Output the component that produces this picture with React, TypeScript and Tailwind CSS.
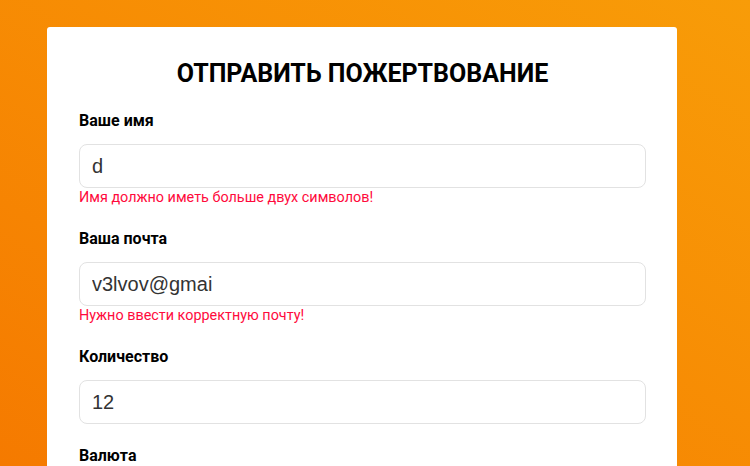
const fields = [
  { label: 'Ваше имя', value: 'd', error: 'Имя должно иметь больше двух символов!' },
  { label: 'Ваша почта', value: 'v3lvov@gmai', error: 'Нужно ввести корректную почту!' },
  { label: 'Количество', value: '12', error: '' },
];

const App = () => {
  return (
    <div className="h-[466px] overflow-hidden bg-gradient-to-tr from-[#f57a00] to-[#f89c08] px-[47px] pt-[27px] font-['Roboto',sans-serif]">
      <div className="w-[630px] min-h-[460px] rounded-[3px] bg-white pt-[31px] pr-[31px] pl-8">
        <h2 className="mb-[19px] text-center text-[25px] leading-8 font-bold text-black">
          ОТПРАВИТЬ ПОЖЕРТВОВАНИЕ
        </h2>

        {fields.map((f) => (
          <div key={f.label} className="mb-5">
            <label className="mb-[11px] block text-base leading-6 font-bold text-black">
              {f.label}
            </label>
            <input
              readOnly
              value={f.value}
              className="block h-11 w-full rounded-lg border border-[#e2e2e2] bg-white px-3 font-['Liberation_Sans',Arial,sans-serif] text-xl text-[#333] outline-none"
            />
            {f.error && (
              <p className="text-[14.4px] leading-[19px] text-[#ff0a3c]">{f.error}</p>
            )}
          </div>
        ))}

        <label className="block text-base leading-6 font-bold text-black">Валюта</label>
      </div>
    </div>
  );
};

export default App;
